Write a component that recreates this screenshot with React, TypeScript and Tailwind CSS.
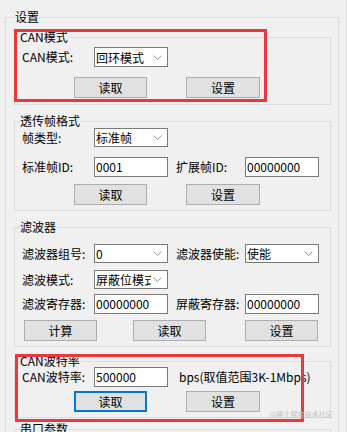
import React from 'react'

function Group({ title, className = '', children }: { title: string; className?: string; children?: React.ReactNode }) {
  return (
    <fieldset className={`w-[317px] border border-[#dcdcdc] ${className}`}>
      <legend className="ml-[5px] leading-[12px]">{title}</legend>
      {children}
    </fieldset>
  )
}

function Chevron() {
  return (
    <svg className="w-[9px] h-[5px] ml-auto mr-[5px] shrink-0" viewBox="0 0 9 5" fill="none" stroke="#9a9a9a" strokeWidth={1}>
      <polyline points="0.5,0.5 4.5,4.5 8.5,0.5" />
    </svg>
  )
}

function Select({ value, h = 'h-[20px]' }: { value: string; h?: string }) {
  return (
    <div className={`w-[74px] ${h} flex items-center border border-[#7a7a7a] bg-white`}>
      <span className="w-[56px] shrink-0 pl-[1px] leading-[17px] overflow-hidden whitespace-nowrap">{value}</span>
      <Chevron />
    </div>
  )
}

function Input({ value }: { value: string }) {
  return <div className="w-[74px] h-[20px] flex items-center border border-[#7a7a7a] bg-white pl-[1px]">{value}</div>
}

function Btn({ label, className = '', focused = false }: { label: string; className?: string; focused?: boolean }) {
  return (
    <div
      className={`w-[73px] h-[21px] flex items-center justify-center bg-[#e1e1e1] ${
        focused ? 'border-2 border-[#0078d7]' : 'border border-[#adadad]'
      } ${className}`}
    >
      {label}
    </div>
  )
}

export default function App() {
  return (
    <div className="relative w-[347px] h-[432px] overflow-hidden bg-[#f0f0f0] border-r border-[#dcdcdc] text-[12px] leading-[12px] text-black font-['Noto_Sans_CJK_SC',sans-serif]">
      <fieldset className="ml-[5px] mt-[11px] w-[334px] border border-[#dcdcdc]">
        <legend className="ml-[9px] leading-[12px]">设置</legend>
        <div className="pl-[8px]">
          {/* CAN mode */}
          <Group title="CAN模式" className="mt-[8px]">
            <div className="pl-[7px] pt-[4px] pb-[6px]">
              <div className="flex items-center">
                <span className="w-[72px]">CAN模式:</span>
                <Select value="回环模式" />
              </div>
              <div className="flex mt-[10px] pl-[52px]">
                <Btn label="读取" />
                <Btn label="设置" className="ml-[39px] w-[74px]" />
              </div>
            </div>
          </Group>

          {/* frame format */}
          <Group title="透传帧格式" className="mt-[10px]">
            <div className="pl-[7px] pt-[1px] pb-[5px]">
              <div className="flex items-center">
                <span className="w-[72px]">帧类型:</span>
                <Select value="标准帧" h="h-[19px]" />
              </div>
              <div className="flex items-center mt-[10px]">
                <span className="w-[72px]">标准帧ID:</span>
                <Input value="0001" />
                <span className="ml-[8px] w-[69px]">扩展帧ID:</span>
                <Input value="00000000" />
              </div>
              <div className="flex mt-[7px] pl-[52px]">
                <Btn label="读取" />
                <Btn label="设置" className="ml-[39px] w-[74px]" />
              </div>
            </div>
          </Group>

          {/* filter */}
          <Group title="滤波器" className="mt-[10px]">
            <div className="pl-[7px] pt-[11px] pb-[5px]">
              <div className="flex items-center">
                <span className="w-[72px]">滤波器组号:</span>
                <Select value="0" h="h-[19px]" />
                <span className="ml-[8px] w-[69px]">滤波器使能:</span>
                <Select value="使能" h="h-[19px]" />
              </div>
              <div className="flex items-center mt-[7px]">
                <span className="w-[72px]">滤波模式:</span>
                <Select value="屏蔽位模式" h="h-[19px]" />
              </div>
              <div className="flex items-center mt-[5px]">
                <span className="w-[72px]">滤波寄存器:</span>
                <Input value="00000000" />
                <span className="ml-[8px] w-[69px]">屏蔽寄存器:</span>
                <Input value="00000000" />
              </div>
              <div className="flex mt-[6px] pl-[2px]">
                <Btn label="计算" />
                <Btn label="读取" className="ml-[36px]" />
                <Btn label="设置" className="ml-[39px]" />
              </div>
            </div>
          </Group>

          {/* baud rate */}
          <Group title="CAN波特率" className="mt-[8px]">
            <div className="pl-[7px] pb-[5px]">
              <div className="flex items-center">
                <span className="w-[72px]">CAN波特率:</span>
                <Input value="500000" />
                <span className="ml-[11px]">bps(取值范围3K-1Mbps)</span>
              </div>
              <div className="flex mt-[4px] pl-[52px]">
                <Btn label="读取" focused />
                <Btn label="设置" className="ml-[39px] w-[74px]" />
              </div>
            </div>
          </Group>

          <Group title="串口参数" className="mt-[5px]">
            <div className="h-[40px]" />
          </Group>
        </div>
      </fieldset>

      {/* annotations */}
      <div className="absolute left-[14px] top-[29px] w-[253px] h-[73px] border-[3px] border-[#e8393e] pointer-events-none" />
      <div className="absolute left-[15px] top-[354px] w-[289px] h-[68px] border-[3px] border-[#e8393e] pointer-events-none" />
      <span className="absolute left-[270px] top-[410px] text-[7px] leading-[8px] text-[#c4c4c4] whitespace-nowrap">@稀土掘金技术社区</span>
    </div>
  )
}
